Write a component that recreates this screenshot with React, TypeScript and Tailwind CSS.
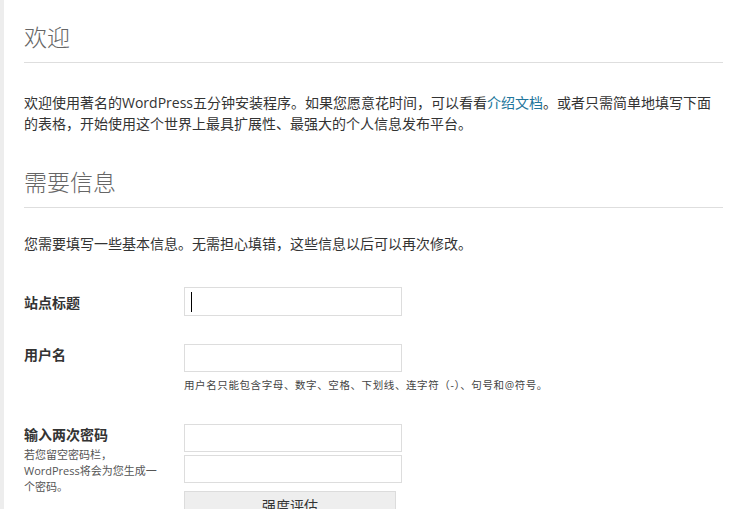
export default function App() {
  const font = { fontFamily: '"Open Sans", "Noto Sans CJK SC", sans-serif' };

  return (
    <main className="flex h-[509px] w-[744px] overflow-hidden bg-white text-[#333]" style={font}>
      <div className="w-[4px] shrink-0 bg-[#ededed]" />
      <div className="flex-1 pl-[20px] pr-[21px]">
        <h1 className="mt-[22px] border-b border-[#dedede] pb-[10px] text-[23px] font-light leading-[30px] text-[#666]">
          欢迎
        </h1>
        <p className="mt-[29px] text-[14px] leading-[21px]">
          欢迎使用著名的WordPress五分钟安装程序。如果您愿意花时间，可以看看
          <a className="text-[#21759b]">介绍文档</a>
          。或者只需简单地填写下面
          <br />
          的表格，开始使用这个世界上最具扩展性、最强大的个人信息发布平台。
        </p>

        <h2 className="mt-[33px] border-b border-[#dedede] pb-[10px] text-[23px] font-light leading-[30px] text-[#666]">
          需要信息
        </h2>
        <p className="mt-[25px] text-[14px] leading-[21px]">
          您需要填写一些基本信息。无需担心填错，这些信息以后可以再次修改。
        </p>

        <div className="mt-[33px] flex">
          <label className="w-[160px] pt-[6px] text-[14px] font-bold leading-[20px]">站点标题</label>
          <div className="relative h-[29px] w-[218px] border border-[#dddddd] bg-white">
            <span className="absolute left-[6px] top-[4px] h-[20px] w-px bg-black" />
          </div>
        </div>

        <div className="mt-[28px] flex">
          <label className="w-[160px] pt-[1px] text-[14px] font-bold leading-[20px]">用户名</label>
          <div>
            <div className="h-[28px] w-[218px] border border-[#dddddd] bg-white" />
            <p className="mt-[6px] whitespace-nowrap text-[10.5px] leading-[14px] tracking-[0.6px] text-[#444]">
              用户名只能包含字母、数字、空格、下划线、连字符（-）、句号和@符号。
            </p>
          </div>
        </div>

        <div className="mt-[32px] flex">
          <div className="w-[160px] pt-[1px]">
            <label className="block text-[14px] font-bold leading-[20px]">输入两次密码</label>
            <p className="mt-[2px] text-[11px] leading-[16px] text-[#555]">
              若您留空密码栏，
              <br />
              WordPress将会为您生成一
              <br />
              个密码。
            </p>
          </div>
          <div>
            <div className="h-[28px] w-[218px] border border-[#dddddd] bg-white" />
            <div className="mt-[3px] h-[28px] w-[218px] border border-[#dddddd] bg-white" />
            <div className="mt-[8px] flex h-[28px] w-[212px] items-center justify-center border border-[#dcdcdc] bg-[#eeeeee] text-[14px] text-[#333]">
              强度评估
            </div>
          </div>
        </div>
      </div>
    </main>
  );
}
